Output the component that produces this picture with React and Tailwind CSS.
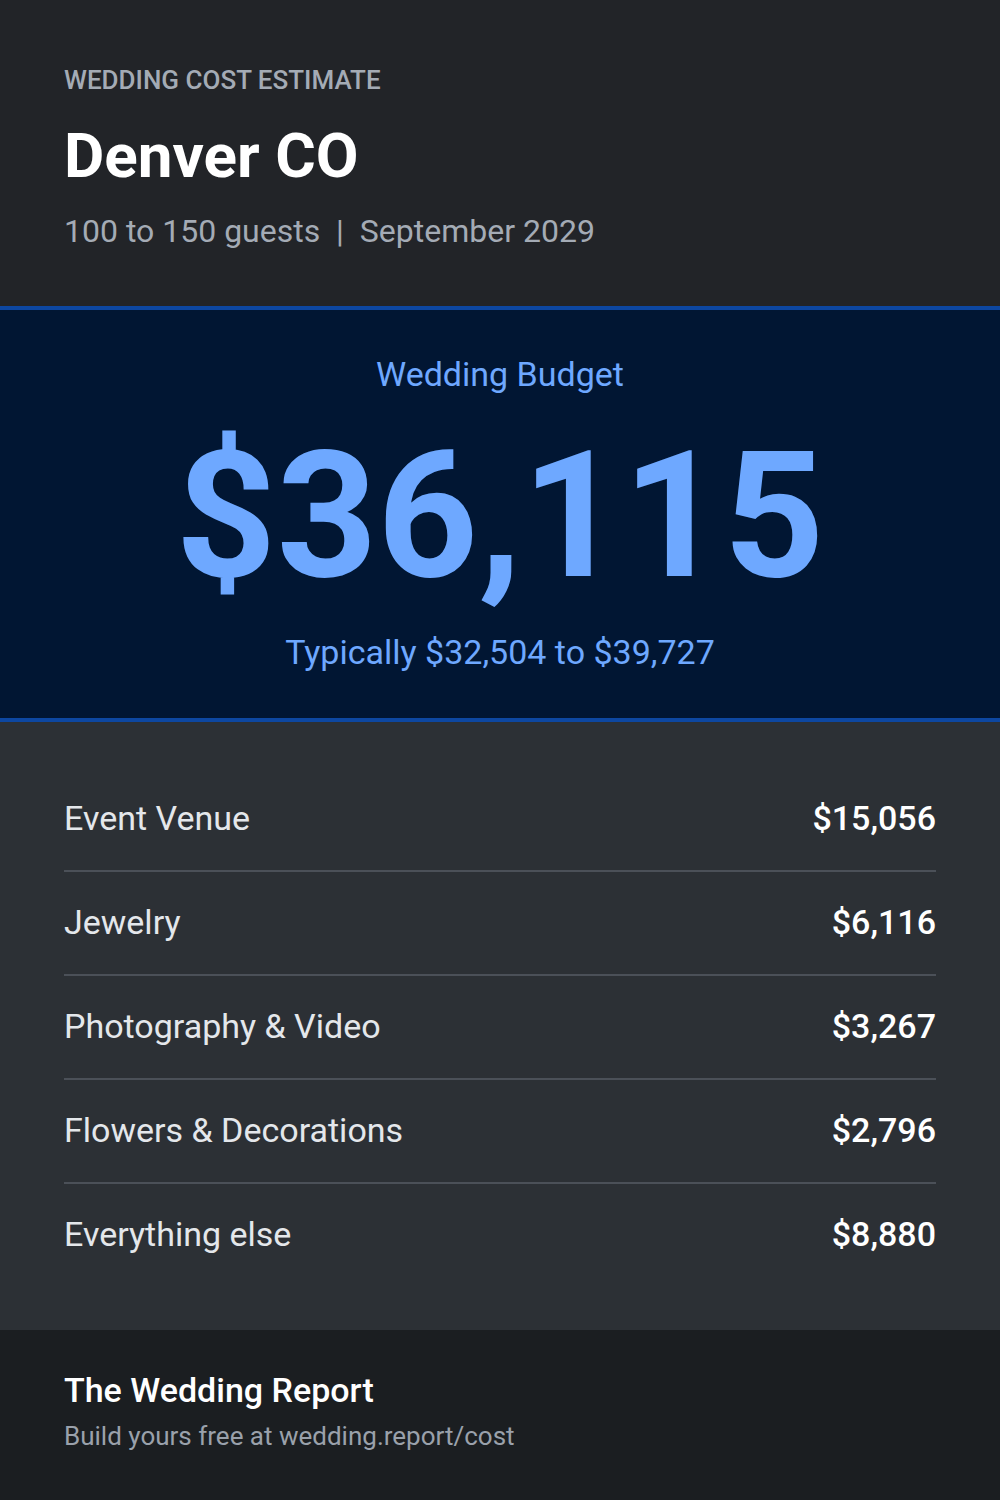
export default function App() {
  const rows = [
    ["Event Venue", "$15,056"],
    ["Jewelry", "$6,116"],
    ["Photography & Video", "$3,267"],
    ["Flowers & Decorations", "$2,796"],
    ["Everything else", "$8,880"],
  ];
  return (
    <div className="w-[1000px] h-[1500px] flex flex-col font-['Roboto',sans-serif]">
      <div className="bg-[#222428] h-[306px] px-[64px] pt-[64px] flex flex-col">
        <div className="text-[26px] leading-[32px] font-medium text-[#a4abb5]">WEDDING COST ESTIMATE</div>
        <div className="text-[62px] leading-[72px] font-bold text-white mt-[24px]">Denver CO</div>
        <div className="text-[32px] leading-[40px] text-[#a4abb5] mt-[19px]">100 to 150 guests&nbsp; |&nbsp; September 2029</div>
      </div>
      <div className="bg-[#011633] border-y-4 border-[#0d47a1] h-[416px] flex flex-col items-center">
        <div className="text-[34px] leading-[40px] text-[#6ea8ff] mt-[44px]">Wedding Budget</div>
        <div className="text-[176px] leading-[176px] font-bold text-[#6ea8ff] mt-[34px]">$36,115</div>
        <div className="text-[34px] leading-[40px] text-[#6ea8ff] mt-[28px]">Typically $32,504 to $39,727</div>
      </div>
      <div className="bg-[#2c3035] flex-1 px-[64px] pt-[46px] flex flex-col">
        {rows.map(([k, v], i) => (
          <div key={k} className={"h-[104px] flex items-start justify-between " + (i < rows.length - 1 ? "border-b-2 border-[#4b5058]" : "")}>
            <span className="text-[34px] leading-[40px] text-[#e4e7eb] mt-[30px]">{k}</span>
            <span className="text-[34px] leading-[40px] font-medium text-white mt-[30px]">{v}</span>
          </div>
        ))}
      </div>
      <div className="bg-[#1b1e21] h-[170px] px-[64px] pt-[40px] flex flex-col">
        <div className="text-[34px] leading-[40px] font-medium text-white">The Wedding Report</div>
        <div className="text-[26px] leading-[32px] text-[#9aa1ab] mt-[10px]">Build yours free at wedding.report/cost</div>
      </div>
    </div>
  );
}
